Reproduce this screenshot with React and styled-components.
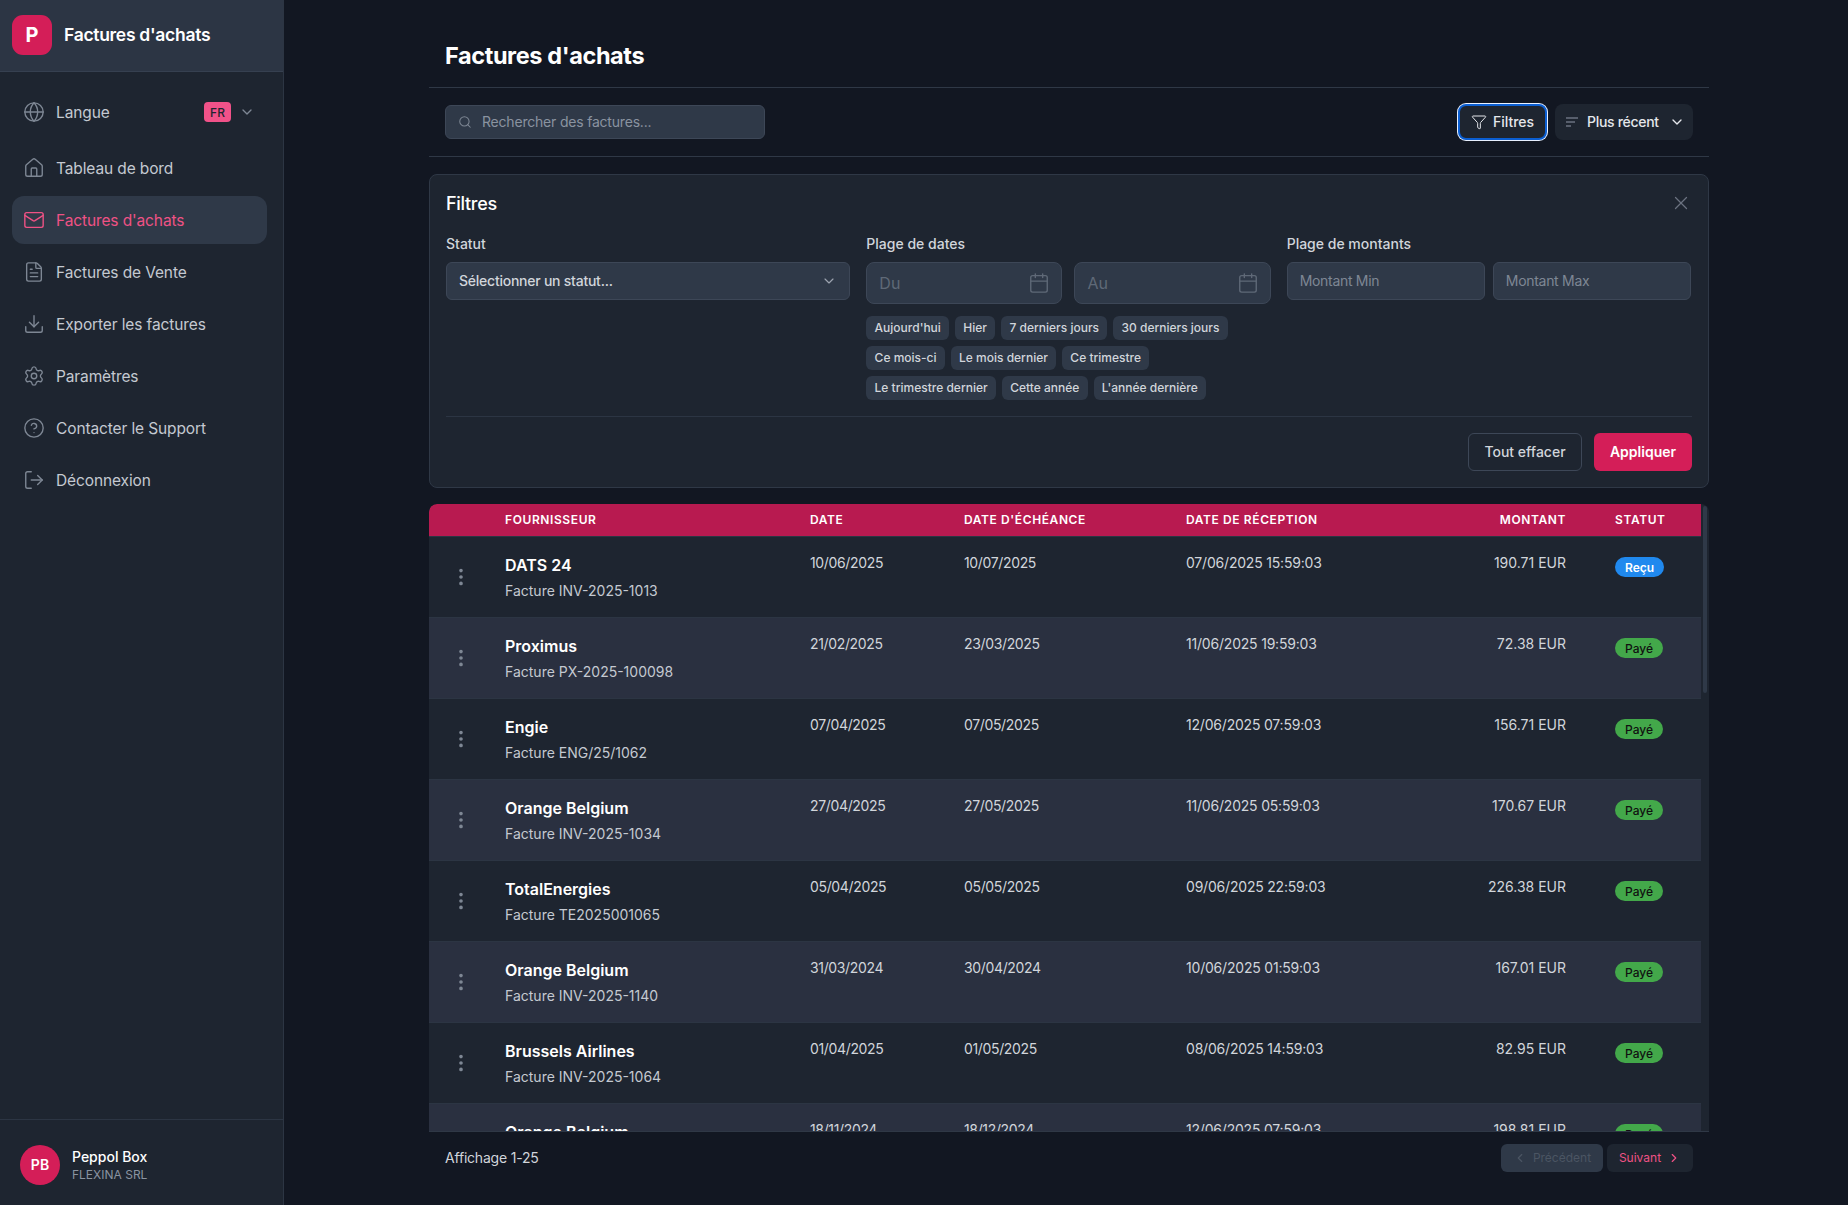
import React from "react";
import styled, { createGlobalStyle } from "styled-components";
import {
  Globe,
  House,
  Mail,
  FileText,
  Download,
  Settings,
  CircleHelp,
  LogOut,
  ChevronDown,
  ChevronLeft,
  ChevronRight,
  Search,
  Funnel,
  X,
  Calendar,
  EllipsisVertical,
} from "lucide-react";

const navItems = [
  { label: "Tableau de bord", icon: House },
  { label: "Factures d'achats", icon: Mail, active: true },
  { label: "Factures de Vente", icon: FileText },
  { label: "Exporter les factures", icon: Download },
  { label: "Paramètres", icon: Settings },
  { label: "Contacter le Support", icon: CircleHelp },
  { label: "Déconnexion", icon: LogOut },
];

const chipRows = [
  ["Aujourd'hui", "Hier", "7 derniers jours", "30 derniers jours"],
  ["Ce mois-ci", "Le mois dernier", "Ce trimestre"],
  ["Le trimestre dernier", "Cette année", "L'année dernière"],
];

const invoices = [
  { name: "DATS 24", ref: "INV-2025-1013", date: "10/06/2025", due: "10/07/2025", received: "07/06/2025 15:59:03", amount: "190.71 EUR", status: "Reçu" },
  { name: "Proximus", ref: "PX-2025-100098", date: "21/02/2025", due: "23/03/2025", received: "11/06/2025 19:59:03", amount: "72.38 EUR", status: "Payé" },
  { name: "Engie", ref: "ENG/25/1062", date: "07/04/2025", due: "07/05/2025", received: "12/06/2025 07:59:03", amount: "156.71 EUR", status: "Payé" },
  { name: "Orange Belgium", ref: "INV-2025-1034", date: "27/04/2025", due: "27/05/2025", received: "11/06/2025 05:59:03", amount: "170.67 EUR", status: "Payé" },
  { name: "TotalEnergies", ref: "TE2025001065", date: "05/04/2025", due: "05/05/2025", received: "09/06/2025 22:59:03", amount: "226.38 EUR", status: "Payé" },
  { name: "Orange Belgium", ref: "INV-2025-1140", date: "31/03/2024", due: "30/04/2024", received: "10/06/2025 01:59:03", amount: "167.01 EUR", status: "Payé" },
  { name: "Brussels Airlines", ref: "INV-2025-1064", date: "01/04/2025", due: "01/05/2025", received: "08/06/2025 14:59:03", amount: "82.95 EUR", status: "Payé" },
  { name: "Orange Belgium", ref: "INV-2025-1001", date: "18/11/2024", due: "18/12/2024", received: "12/06/2025 07:59:03", amount: "198.81 EUR", status: "Payé" },
];

export default function App() {
  return (
    <>
      <GlobalStyle />
      <Layout>
        <Sidebar>
          <Brand>
            <BrandLogo>P</BrandLogo>
            <BrandName>Factures d'achats</BrandName>
          </Brand>
          <Nav>
            <LangRow>
              <Globe size={22} strokeWidth={1.5} color="#7e8794" />
              <NavLabel>Langue</NavLabel>
              <LangBadge>FR</LangBadge>
              <LangChevron>
                <ChevronDown size={16} strokeWidth={2} color="#7e8794" />
              </LangChevron>
            </LangRow>
            {navItems.map(({ label, icon: Icon, active }) => (
              <NavItem key={label} $active={active}>
                <Icon size={22} strokeWidth={1.5} color={active ? "#ef5285" : "#7e8794"} />
                <NavLabel>{label}</NavLabel>
              </NavItem>
            ))}
          </Nav>
          <UserBox>
            <Avatar>PB</Avatar>
            <div>
              <UserName>Peppol Box</UserName>
              <UserCompany>FLEXINA SRL</UserCompany>
            </div>
          </UserBox>
        </Sidebar>

        <Main>
          <PageHeader>
            <PageTitle>Factures d'achats</PageTitle>
          </PageHeader>

          <Toolbar>
            <SearchBox>
              <Search size={14} strokeWidth={1.75} color="#7e8794" />
              <span>Rechercher des factures...</span>
            </SearchBox>
            <ToolbarActions>
              <FilterButton>
                <Funnel size={16} strokeWidth={1.5} />
                Filtres
              </FilterButton>
              <SortButton>
                <svg width="14" height="12" viewBox="0 0 14 12" fill="none" stroke="#6b7280" strokeWidth="1.5">
                  <path d="M1 2h12M1 6h9M1 10h5" />
                </svg>
                <SortLabel>Plus récent</SortLabel>
                <ChevronDown size={16} strokeWidth={2} />
              </SortButton>
            </ToolbarActions>
          </Toolbar>

          <FilterPanel>
            <PanelHead>
              <PanelTitle>Filtres</PanelTitle>
              <CloseIcon>
                <X size={22} strokeWidth={1.35} color="#6b7280" />
              </CloseIcon>
            </PanelHead>
            <FilterGrid>
              <div>
                <FieldLabel>Statut</FieldLabel>
                <SelectBox>
                  Sélectionner un statut...
                  <ChevronDown size={16} strokeWidth={1.75} color="#9ca3af" />
                </SelectBox>
              </div>
              <div>
                <FieldLabel>Plage de dates</FieldLabel>
                <DateRow>
                  <DateInput>
                    Du
                    <Calendar size={22} strokeWidth={1.5} color="#5f6977" />
                  </DateInput>
                  <DateInput>
                    Au
                    <Calendar size={22} strokeWidth={1.5} color="#5f6977" />
                  </DateInput>
                </DateRow>
                <ChipGroup>
                  {chipRows.map((row) => (
                    <ChipRow key={row[0]}>
                      {row.map((chip) => (
                        <Chip key={chip}>{chip}</Chip>
                      ))}
                    </ChipRow>
                  ))}
                </ChipGroup>
              </div>
              <div>
                <FieldLabel>Plage de montants</FieldLabel>
                <AmountRow>
                  <AmountInput>Montant Min</AmountInput>
                  <AmountInput>Montant Max</AmountInput>
                </AmountRow>
              </div>
            </FilterGrid>
            <PanelFooter>
              <GhostButton>Tout effacer</GhostButton>
              <PrimaryButton>Appliquer</PrimaryButton>
            </PanelFooter>
          </FilterPanel>

          <TableWrap>
            <ScrollThumb />
            <HeadRow>
              <span />
              <HeadCell>Fournisseur</HeadCell>
              <HeadCell>Date</HeadCell>
              <HeadCell>Date d'échéance</HeadCell>
              <HeadCell>Date de réception</HeadCell>
              <HeadCell $right>Montant</HeadCell>
              <StatusHead>Statut</StatusHead>
            </HeadRow>
            {invoices.map((row, i) => (
              <Row key={row.name + row.ref} $even={i % 2 === 1}>
                <MenuCell>
                  <EllipsisVertical size={22} strokeWidth={2} color="#7e8794" />
                </MenuCell>
                <div>
                  <SupplierName>{row.name}</SupplierName>
                  <InvoiceRef>Facture {row.ref}</InvoiceRef>
                </div>
                <DateCell>{row.date}</DateCell>
                <DateCell>{row.due}</DateCell>
                <StampCell>{row.received}</StampCell>
                <Cell $right>{row.amount}</Cell>
                <StatusCell>
                  <StatusBadge $received={row.status === "Reçu"}>{row.status}</StatusBadge>
                </StatusCell>
              </Row>
            ))}
          </TableWrap>

          <Pager>
            <PagerInfo>Affichage 1-25</PagerInfo>
            <PagerButtons>
              <PrevButton>
                <ChevronLeft size={14} strokeWidth={2} />
                Précédent
              </PrevButton>
              <NextButton>
                Suivant
                <ChevronRight size={14} strokeWidth={2} />
              </NextButton>
            </PagerButtons>
          </Pager>
        </Main>
      </Layout>
    </>
  );
}

const GlobalStyle = createGlobalStyle`
  * { box-sizing: border-box; }
  html, body { margin: 0; height: 100%; background: #121722; }
  body { font-family: Inter, "Liberation Sans", sans-serif; color: #d1d5db; overflow: hidden; }
`;

const Layout = styled.div`
  display: flex;
  height: 1205px;
  overflow: hidden;
  background: #121722;
`;

const Sidebar = styled.aside`
  width: 284px;
  flex-shrink: 0;
  display: flex;
  flex-direction: column;
  background: #1e2530;
  border-right: 1px solid #2c3543;
`;

const Brand = styled.div`
  height: 72px;
  display: flex;
  align-items: center;
  gap: 12px;
  padding: 0 12px 2px;
  background: #2c3544;
  border-bottom: 1px solid #364050;
`;

const BrandLogo = styled.div`
  width: 40px;
  height: 40px;
  border-radius: 11px;
  background: #d41e58;
  color: #fff;
  font-size: 20px;
  font-weight: 700;
  display: flex;
  align-items: center;
  justify-content: center;
`;

const BrandName = styled.div`
  color: #fff;
  font-size: 17.5px;
  font-weight: 600;
  letter-spacing: -0.3px;
`;

const Nav = styled.nav`
  flex: 1;
  display: flex;
  flex-direction: column;
  gap: 4px;
  padding: 16px 16px 16px 12px;
`;

const NavItem = styled.div`
  height: 48px;
  display: flex;
  align-items: center;
  gap: 11px;
  padding: 0 11px;
  border-radius: 12px;
  background: ${(p) => (p.$active ? "#2f3948" : "transparent")};
  color: ${(p) => (p.$active ? "#ef5285" : "#c4c9d1")};
`;

const LangRow = styled(NavItem)`
  margin-bottom: 4px;
`;

const NavLabel = styled.span`
  font-size: 15.5px;
  font-weight: 400;
  letter-spacing: -0.12px;
`;

const LangBadge = styled.span`
  margin-left: auto;
  width: 27px;
  height: 20px;
  border-radius: 4px;
  background: #f15289;
  color: #1e2530;
  font-size: 12px;
  font-weight: 500;
  display: flex;
  align-items: center;
  justify-content: center;
`;

const LangChevron = styled.span`
  display: flex;
  margin: 0 1px 0 -3px;
`;

const UserBox = styled.div`
  height: 86px;
  display: flex;
  align-items: center;
  gap: 12px;
  padding: 4px 20px 0;
  border-top: 1px solid #2c3543;
`;

const Avatar = styled.div`
  width: 40px;
  height: 40px;
  border-radius: 50%;
  background: #d41e58;
  color: #fff;
  font-size: 14px;
  font-weight: 600;
  display: flex;
  align-items: center;
  justify-content: center;
`;

const UserName = styled.div`
  color: #fff;
  font-size: 14px;
  font-weight: 500;
  line-height: 20px;
`;

const UserCompany = styled.div`
  color: #8a93a0;
  font-size: 12px;
  line-height: 16px;
`;

const Main = styled.main`
  width: 1280px;
  margin-left: 145px;
  display: flex;
  flex-direction: column;
`;

const PageHeader = styled.header`
  padding: 40px 16px 15px;
  border-bottom: 1px solid #2f3846;
`;

const PageTitle = styled.h1`
  margin: 0;
  color: #fff;
  font-size: 23.5px;
  line-height: 32px;
  font-weight: 700;
  letter-spacing: -0.4px;
`;

const Toolbar = styled.div`
  height: 69px;
  display: flex;
  align-items: center;
  justify-content: space-between;
  padding: 0 16px;
  border-bottom: 1px solid #2f3846;
`;

const SearchBox = styled.div`
  width: 320px;
  height: 34px;
  display: flex;
  align-items: center;
  gap: 10px;
  padding: 0 12px 1px;
  background: #2f3948;
  border: 1px solid #3d4757;
  border-radius: 6px;
  color: #8a93a0;
  font-size: 14px;
  letter-spacing: -0.2px;
`;

const ToolbarActions = styled.div`
  display: flex;
  align-items: center;
  gap: 8px;
`;

const FilterButton = styled.button`
  width: 89px;
  height: 36px;
  display: flex;
  align-items: center;
  justify-content: center;
  gap: 6px;
  padding: 0 0 1px;
  background: #1e2530;
  border: 2px solid #0b5ed1;
  border-radius: 8px;
  box-shadow: 0 0 0 1px #e8f0ff;
  color: #e5e7eb;
  font: 500 14px Inter, sans-serif;
`;

const SortButton = styled.button`
  width: 138px;
  height: 36px;
  display: flex;
  align-items: center;
  padding: 0 8px 1px 10px;
  background: #1e2530;
  border: 0;
  border-radius: 8px;
  color: #e5e7eb;
  font: 500 14px Inter, sans-serif;
`;

const SortLabel = styled.span`
  margin: 0 auto 0 8px;
  letter-spacing: -0.3px;
`;

const FilterPanel = styled.section`
  margin-top: 17px;
  padding: 15px 17px 16px 16px;
  background: #1e2530;
  border: 1px solid #2f3846;
  border-radius: 8px;
`;

const PanelHead = styled.div`
  display: flex;
  align-items: center;
  justify-content: space-between;
  margin-bottom: 18px;
  height: 26px;
`;

const PanelTitle = styled.h2`
  margin: 0;
  color: #fff;
  font-size: 18px;
  font-weight: 500;
  letter-spacing: -0.3px;
`;

const CloseIcon = styled.span`
  display: flex;
  margin-right: -1px;
`;

const FilterGrid = styled.div`
  display: grid;
  grid-template-columns: repeat(3, 1fr);
  gap: 16px;
`;

const FieldLabel = styled.div`
  margin-bottom: 8px;
  color: #d1d5db;
  font-size: 14px;
  line-height: 20px;
  font-weight: 500;
`;

const SelectBox = styled.div`
  height: 38px;
  display: flex;
  align-items: center;
  justify-content: space-between;
  padding: 0 12px 1px 12px;
  background: #2f3948;
  border: 1px solid #3d4757;
  border-radius: 6px;
  color: #d1d5db;
  font-size: 14px;
  font-weight: 500;
  letter-spacing: -0.24px;
`;

const DateRow = styled.div`
  display: grid;
  grid-template-columns: 1fr 1fr;
  gap: 12px;
`;

const DateInput = styled.div`
  height: 42px;
  display: flex;
  align-items: center;
  justify-content: space-between;
  padding: 0 11px 0 12px;
  background: #2f3948;
  border: 1px solid #3d4757;
  border-radius: 8px;
  color: #5f6977;
  font-size: 16px;
`;

const ChipGroup = styled.div`
  display: flex;
  flex-direction: column;
  gap: 6px;
  margin-top: 12px;
`;

const ChipRow = styled.div`
  display: flex;
  gap: 6px;
`;

const Chip = styled.span`
  height: 24px;
  display: flex;
  align-items: center;
  padding: 0 8.25px 1px;
  background: #2f3948;
  border-radius: 6px;
  color: #d1d5db;
  font-size: 12px;
  font-weight: 500;
`;

const AmountRow = styled.div`
  display: grid;
  grid-template-columns: 1fr 1fr;
  gap: 8px;
`;

const AmountInput = styled.div`
  height: 38px;
  display: flex;
  align-items: center;
  padding: 0 12px 1px;
  background: #2f3948;
  border: 1px solid #3d4757;
  border-radius: 6px;
  color: #7e8794;
  font-size: 14px;
  letter-spacing: -0.3px;
`;

const PanelFooter = styled.div`
  display: flex;
  justify-content: flex-end;
  gap: 12px;
  margin: 16px -1px 0 0;
  padding-top: 16px;
  border-top: 1px solid #2c3543;
`;

const GhostButton = styled.button`
  width: 114px;
  height: 38px;
  padding: 0 0 1px;
  background: transparent;
  border: 1px solid #3d4757;
  border-radius: 6px;
  color: #d1d5db;
  font: 500 14px Inter, sans-serif;
`;

const PrimaryButton = styled.button`
  width: 98px;
  height: 38px;
  padding: 0 0 1px;
  background: #d41e58;
  border: 0;
  border-radius: 6px;
  color: #fff;
  font: 600 14px Inter, sans-serif;
`;

const TableWrap = styled.div`
  position: relative;
  margin-top: 16px;
  height: 627px;
  flex-shrink: 0;
  padding-right: 8px;
  overflow: hidden;
  background: #1e2530;
  border-radius: 8px 8px 0 0;
`;

const ScrollThumb = styled.div`
  position: absolute;
  top: 2px;
  right: 2px;
  width: 4px;
  height: 187px;
  border-radius: 2px;
  background: #2f3948;
`;

const columns = "76px 305px 154px 222px 244px 136px 1fr";

const HeadRow = styled.div`
  display: grid;
  grid-template-columns: ${columns};
  align-items: center;
  height: 33px;
  padding-bottom: 2px;
  background: #b81a50;
  border-bottom: 1px solid #2c3543;
  border-radius: 8px 0 0 0;
`;

const HeadCell = styled.div`
  color: #fff;
  font-size: 12px;
  font-weight: 600;
  letter-spacing: 0.05em;
  text-transform: uppercase;
  text-align: ${(p) => (p.$right ? "right" : "left")};
`;

const StatusHead = styled(HeadCell)`
  padding-left: 49px;
`;

const Row = styled.div`
  display: grid;
  grid-template-columns: ${columns};
  height: 81px;
  padding-top: 16px;
  background: ${(p) => (p.$even ? "#2a3040" : "#1e2530")};
  border-bottom: 1px solid #2c3543;
`;

const MenuCell = styled.div`
  display: flex;
  justify-content: center;
  padding: 13px 12px 0 0;
`;

const SupplierName = styled.div`
  color: #fff;
  font-size: 16px;
  line-height: 24px;
  font-weight: 600;
`;

const InvoiceRef = styled.div`
  margin-top: 4px;
  color: #c4c9d1;
  font-size: 14px;
  line-height: 20px;
`;

const Cell = styled.div`
  color: #d1d5db;
  font-size: 14px;
  line-height: 20px;
  text-align: ${(p) => (p.$right ? "right" : "left")};
`;

const DateCell = styled(Cell)`
  letter-spacing: -0.35px;
`;

const StampCell = styled(Cell)`
  letter-spacing: -0.2px;
`;

const StatusCell = styled.div`
  display: flex;
  align-items: flex-start;
  padding: 4px 0 0 49px;
`;

const StatusBadge = styled.span`
  display: inline-flex;
  align-items: center;
  height: 20px;
  padding: 0 10px;
  border-radius: 10px;
  background: ${(p) => (p.$received ? "#2089ee" : "#43a84a")};
  color: ${(p) => (p.$received ? "#fff" : "#111")};
  font-size: 12px;
  font-weight: ${(p) => (p.$received ? 600 : 500)};
`;

const Pager = styled.footer`
  height: 41px;
  display: flex;
  align-items: flex-start;
  justify-content: space-between;
  padding: 12px 16px 0;
  border-top: 1px solid #2f3846;
`;

const PagerInfo = styled.div`
  color: #d1d5db;
  font-size: 14px;
  line-height: 28px;
  letter-spacing: -0.2px;
`;

const PagerButtons = styled.div`
  display: flex;
  gap: 4px;
`;

const PrevButton = styled.button`
  width: 102px;
  height: 28px;
  display: flex;
  align-items: center;
  justify-content: center;
  gap: 6px;
  padding: 0 0 1px;
  background: #2f3948;
  border: 0;
  border-radius: 6px;
  color: #4b5563;
  font: 400 12px Inter, sans-serif;
`;

const NextButton = styled(PrevButton)`
  width: 86px;
  background: #1e2530;
  color: #ef5285;
`;
